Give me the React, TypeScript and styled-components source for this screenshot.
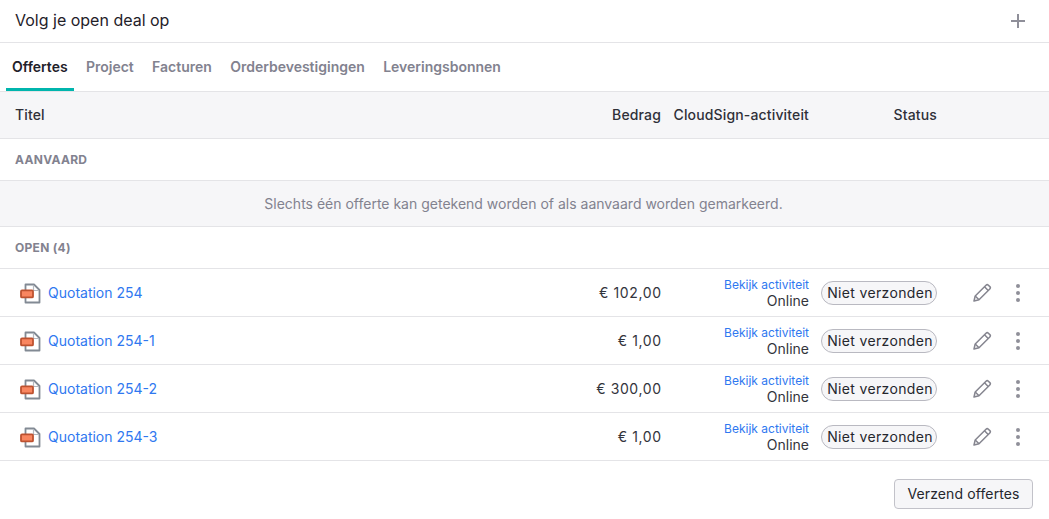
import styled, { createGlobalStyle } from 'styled-components';

const GlobalStyle = createGlobalStyle`
  html, body { margin: 0; padding: 0; background: #fff; }
  body { font-family: Inter, "Liberation Sans", sans-serif; color: #1f2129; }
`;

const Page = styled.div`
  width: 1049px;
`;

const TitleBar = styled.div`
  height: 42px;
  display: flex;
  align-items: center;
  justify-content: space-between;
  padding: 0 23px 0 15px;
  border-bottom: 1px solid #e4e4e7;
`;

const Heading = styled.h2`
  margin: 0 0 3px;
  font-size: 16px;
  font-weight: 400;
  color: #1f2129;
`;

const Tabs = styled.div`
  height: 48px;
  display: flex;
  gap: 6.3px;
  padding-left: 6px;
  border-bottom: 1px solid #e4e4e7;
`;

const Tab = styled.div<{ $active?: boolean }>`
  display: flex;
  align-items: center;
  padding: 0 6px 2px;
  font-size: 14px;
  font-weight: 600;
  color: ${(p) => (p.$active ? '#1f2129' : '#82828f')};
  box-shadow: ${(p) => (p.$active ? 'inset 0 -3px 0 #00b5ad' : 'none')};
`;

const Columns = styled.div`
  display: grid;
  grid-template-columns: 1fr 100px 148px 128px 112px;
  align-items: center;
  border-bottom: 1px solid #e4e4e7;
`;

const HeaderRow = styled(Columns)`
  height: 44px;
  padding-bottom: 2px;
  background: #f6f6f8;
  font-size: 14px;
  font-weight: 500;
  letter-spacing: 0.15px;
  color: #2f3038;
`;

const TitleCell = styled.div`
  padding-left: 15px;
  display: flex;
  align-items: center;
`;

const RightCell = styled.div`
  text-align: right;
`;

const Section = styled.div`
  height: 41px;
  display: flex;
  align-items: center;
  padding-left: 15px;
  font-size: 12px;
  font-weight: 700;
  letter-spacing: 0.3px;
  color: #82828f;
  border-bottom: 1px solid #e4e4e7;
`;

const Notice = styled.div`
  height: 45px;
  display: flex;
  align-items: center;
  justify-content: center;
  padding-right: 2px;
  background: #f6f6f8;
  font-size: 14px;
  color: #82828f;
  border-bottom: 1px solid #e4e4e7;
`;

const Row = styled(Columns)`
  height: 47px;
`;

const DocIcon = styled.svg`
  width: 22px;
  height: 22px;
  margin: 0 7px 0 4px;
  flex: none;
`;

const QuoteLink = styled.a`
  font-size: 14px;
  color: #2f78f0;
  text-decoration: none;
`;

const Amount = styled(RightCell)`
  margin-right: -0.6px;
  font-size: 14px;
  letter-spacing: 0.6px;
  color: #33343c;
`;

const Activity = styled(RightCell)`
  display: flex;
  flex-direction: column;
  gap: 1px;
`;

const ActivityLink = styled.a`
  font-size: 12px;
  line-height: 15px;
  color: #2f78f0;
`;

const ActivitySource = styled.span`
  font-size: 14px;
  line-height: 16px;
  color: #33343c;
`;

const StatusCell = styled.div`
  padding-left: 12px;
`;

const Pill = styled.span`
  display: flex;
  align-items: center;
  justify-content: center;
  width: 116px;
  height: 24px;
  box-sizing: border-box;
  padding-left: 2px;
  border: 1px solid #b9b9c1;
  border-radius: 12px;
  background: #f6f6f8;
  font-size: 14px;
  letter-spacing: 0.35px;
  color: #25262d;
`;

const Actions = styled.div`
  display: flex;
  align-items: center;
  padding-left: 35px;
  gap: 23px;
`;

const IconSvg = styled.svg`
  display: block;
  flex: none;
`;

const Footer = styled.div`
  display: flex;
  justify-content: flex-end;
  padding: 18px 16px 0 0;
`;

const Button = styled.button`
  width: 139px;
  height: 30px;
  padding: 0 0 2px;
  border: 1px solid #c2c2c9;
  border-radius: 4px;
  background: #f6f6f8;
  font-family: inherit;
  font-size: 14px;
  letter-spacing: 0.12px;
  color: #25262d;
`;

function PlusIcon() {
  return (
    <IconSvg width="16" height="16" viewBox="0 0 16 16">
      <path d="M8 1v14M1 8h14" stroke="#8f8f99" strokeWidth="2" fill="none" />
    </IconSvg>
  );
}

function QuoteIcon() {
  return (
    <DocIcon viewBox="0 0 22 22">
      <path
        d="M6.5 8V2.5H15L20.5 8V20.5H6.5V15"
        fill="#fff"
        stroke="#828a94"
        strokeWidth="1.8"
        strokeLinejoin="round"
      />
      <path d="M14.5 3V8.5H20" fill="none" stroke="#b4b9c0" strokeWidth="1.2" />
      <rect x="2" y="8.4" width="12" height="7" rx="1" fill="#f98660" stroke="#bd5230" strokeWidth="1.8" />
    </DocIcon>
  );
}

function PencilIcon() {
  return (
    <IconSvg width="20" height="20" viewBox="0 0 20 20" fill="none" stroke="#85858f" strokeWidth="1.5" strokeLinejoin="round">
      <path d="M2 18l1.2-5L14 2.2a1.7 1.7 0 0 1 2.4 0l1.4 1.4a1.7 1.7 0 0 1 0 2.4L7 16.8z" />
      <path d="M12.5 3.8l3.7 3.7M3.2 13l3.8 3.8" />
    </IconSvg>
  );
}

function MoreIcon() {
  return (
    <IconSvg width="6" height="20" viewBox="0 0 6 20" fill="#8f8f99">
      <circle cx="3" cy="3" r="2" />
      <circle cx="3" cy="10" r="2" />
      <circle cx="3" cy="17" r="2" />
    </IconSvg>
  );
}

const tabs = ['Offertes', 'Project', 'Facturen', 'Orderbevestigingen', 'Leveringsbonnen'];

const quotes = [
  { title: 'Quotation 254', amount: '€ 102,00' },
  { title: 'Quotation 254-1', amount: '€ 1,00' },
  { title: 'Quotation 254-2', amount: '€ 300,00' },
  { title: 'Quotation 254-3', amount: '€ 1,00' },
];

export default function App() {
  return (
    <Page>
      <GlobalStyle />
      <TitleBar>
        <Heading>Volg je open deal op</Heading>
        <PlusIcon />
      </TitleBar>
      <Tabs>
        {tabs.map((tab, i) => (
          <Tab key={tab} $active={i === 0}>
            {tab}
          </Tab>
        ))}
      </Tabs>
      <HeaderRow>
        <TitleCell>Titel</TitleCell>
        <RightCell>Bedrag</RightCell>
        <RightCell>CloudSign-activiteit</RightCell>
        <RightCell>Status</RightCell>
        <div />
      </HeaderRow>
      <Section>AANVAARD</Section>
      <Notice>Slechts één offerte kan getekend worden of als aanvaard worden gemarkeerd.</Notice>
      <Section>OPEN (4)</Section>
      {quotes.map((quote) => (
        <Row key={quote.title}>
          <TitleCell>
            <QuoteIcon />
            <QuoteLink>{quote.title}</QuoteLink>
          </TitleCell>
          <Amount>{quote.amount}</Amount>
          <Activity>
            <ActivityLink>Bekijk activiteit</ActivityLink>
            <ActivitySource>Online</ActivitySource>
          </Activity>
          <StatusCell>
            <Pill>Niet verzonden</Pill>
          </StatusCell>
          <Actions>
            <PencilIcon />
            <MoreIcon />
          </Actions>
        </Row>
      ))}
      <Footer>
        <Button>Verzend offertes</Button>
      </Footer>
    </Page>
  );
}
